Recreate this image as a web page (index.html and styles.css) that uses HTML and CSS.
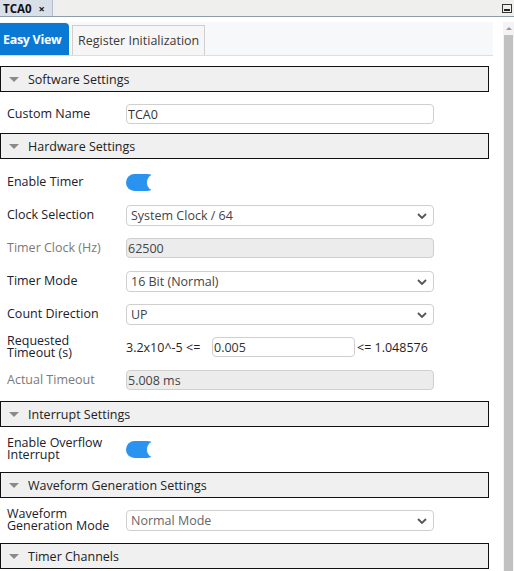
FILE: index.html
```html
<!DOCTYPE html>
<html>
<head>
<meta charset="utf-8">
<link rel="stylesheet" href="styles.css">
</head>
<body>
<div class="topbar">
  <div class="doc-tab"><span class="doc-title">TCA0</span><span class="doc-close">×</span></div>
  <div class="minbtn"><span></span></div>
</div>
<div class="main">
  <div class="content">
    <div class="viewtabs">
      <div class="vtab active">Easy View</div>
      <div class="vtab">Register Initialization</div>
    </div>

    <div class="sec-head"><span class="tri"></span>Software Settings</div>
    <div class="sec-body sw">
      <div class="row"><div class="label">Custom Name</div><input class="field" value="TCA0"></div>
    </div>

    <div class="sec-head"><span class="tri"></span>Hardware Settings</div>
    <div class="sec-body hw">
      <div class="row"><div class="label">Enable Timer</div><div class="toggle"><span class="knob"></span></div></div>
      <div class="row"><div class="label">Clock Selection</div><div class="select">System Clock / 64<svg class="chev" width="10" height="6" viewBox="0 0 10 6"><path d="M1 1 L5 5 L9 1" fill="none" stroke="#555" stroke-width="1.8"/></svg></div></div>
      <div class="row"><div class="label dim">Timer Clock (Hz)</div><input class="field disabled" value="62500" disabled></div>
      <div class="row"><div class="label">Timer Mode</div><div class="select">16 Bit (Normal)<svg class="chev" width="10" height="6" viewBox="0 0 10 6"><path d="M1 1 L5 5 L9 1" fill="none" stroke="#555" stroke-width="1.8"/></svg></div></div>
      <div class="row"><div class="label">Count Direction</div><div class="select">UP<svg class="chev" width="10" height="6" viewBox="0 0 10 6"><path d="M1 1 L5 5 L9 1" fill="none" stroke="#555" stroke-width="1.8"/></svg></div></div>
      <div class="row"><div class="label two">Requested<br>Timeout (s)</div>
        <div class="range"><span class="rmin">3.2x10^-5 &lt;=</span><input class="field short" value="0.005"><span class="rmax">&lt;= 1.048576</span></div>
      </div>
      <div class="row"><div class="label dim">Actual Timeout</div><input class="field disabled" value="5.008 ms" disabled></div>
    </div>

    <div class="sec-head"><span class="tri"></span>Interrupt Settings</div>
    <div class="sec-body tall">
      <div class="row"><div class="label two">Enable Overflow<br>Interrupt</div><div class="toggle"><span class="knob"></span></div></div>
    </div>

    <div class="sec-head"><span class="tri"></span>Waveform Generation Settings</div>
    <div class="sec-body tall">
      <div class="row"><div class="label two">Waveform<br>Generation Mode</div><div class="select light">Normal Mode<svg class="chev" width="10" height="6" viewBox="0 0 10 6"><path d="M1 1 L5 5 L9 1" fill="none" stroke="#555" stroke-width="1.8"/></svg></div></div>
    </div>

    <div class="sec-head"><span class="tri"></span>Timer Channels</div>
  </div>
  <div class="scrollbar">
    <div class="sb-arrow"></div>
    <div class="sb-thumb"></div>
  </div>
</div>
</body>
</html>
```
FILE: styles.css
```css
* { box-sizing: border-box; }
html, body { margin: 0; padding: 0; background: #fff; overflow: hidden; }
body {
  width: 514px; height: 571px;
  font-family: "Open Sans", "Noto Sans", sans-serif;
  font-size: 12px;
  color: #1f1f2a;
}
.topbar {
  height: 17px;
  background: #efefed;
  border-bottom: 1px solid #8d9bab;
  display: flex;
  justify-content: space-between;
  align-items: stretch;
}
.doc-tab {
  width: 53px;
  background: #d9dfe9;
  border-right: 1px solid #b5bfcc;
  display: flex;
  align-items: center;
  padding-left: 3px;
  gap: 7px;
  font-weight: bold;
  font-size: 11.5px;
  color: #111;
}
.doc-close { font-size: 11px; font-weight: bold; }
.minbtn {
  width: 10px; height: 9px;
  margin: 4px 2px 0 0;
  border: 1px solid #333;
  display: flex; align-items: flex-end; justify-content: center;
  padding-bottom: 1px;
}
.minbtn span { width: 6px; height: 2px; background: #222; display: block; }
.main { display: flex; gap: 10px; height: 554px; }
.content { width: 493px; }
.viewtabs {
  margin-top: 5px;
  height: 34px;
  background: #f7f8fa;
  border-bottom: 1px solid #dcdee2;
  display: flex;
  align-items: flex-end;
  gap: 3px;
  margin-bottom: 10px;
}
.vtab {
  height: 30px;
  padding: 0 5px;
  display: flex; align-items: center;
  background: #f6f6f6;
  border: 1px solid #cfcfcf;
  border-bottom: none;
  color: #3a3a3a;
  font-size: 12.5px;
  white-space: nowrap;
}
.vtab.active {
  height: 32px;
  min-width: 69px;
  padding: 0 3px;
  background: #0a79d5;
  border: none;
  border-top-right-radius: 4px;
  color: #fff;
  font-weight: bold;
  font-size: 12.5px;
  letter-spacing: -0.3px;
}
.sec-head {
  width: 489px;
  height: 26px;
  background: #f0f0f0;
  border: 1px solid #111;
  display: flex; align-items: center;
  padding-left: 8px;
  font-size: 12.5px;
  color: #222;
}
.tri {
  width: 0; height: 0;
  border-left: 5px solid transparent;
  border-right: 5px solid transparent;
  border-top: 5px solid #8a8a8a;
  margin-right: 9px;
}
.sec-body {
  padding: 12px 0 10px 7px;
  display: flex; flex-direction: column; gap: 13px;
}
.sec-body.sw { padding: 12px 0 9px 7px; }
.sec-body.hw { padding: 13px 0 11px 7px; }
.sec-body.tall { padding: 12px 0 13px 7px; }
.row { display: flex; align-items: center; height: 20px; }
.label { width: 119px; color: #20202c; font-size: 12.5px; line-height: 14px; white-space: nowrap; }
.label.dim { color: #7a7a7a; }
.label.two { line-height: 12px; font-size: 12.5px; }
.field {
  width: 308px; height: 20px;
  border: 1px solid #cfcfcf;
  border-radius: 4px;
  background: #fff;
  font-family: inherit;
  font-size: 12.5px;
  color: #333;
  padding: 0 1px;
  outline: none;
}
.field.disabled { background: #ececec; color: #444; }
.field.short { width: 143px; }
.select {
  position: relative;
  width: 308px; height: 21px;
  border: 1px solid #cfcfcf;
  border-radius: 4px;
  background: #fff;
  display: flex; align-items: center;
  padding-left: 4px;
  font-size: 12.5px;
  color: #444;
}
.select.light { color: #666; }
.chev { position: absolute; right: 6px; top: 7px; }
.range { display: flex; align-items: center; font-size: 12.5px; color: #1f1f2a; }
.rmin { width: 86px; }
.rmax { margin-left: 2px; }
.toggle {
  position: relative;
  width: 30px; height: 17px;
  background: #2a93f0;
  border-radius: 9px;
}
.knob {
  position: absolute;
  left: 21px; top: 0;
  width: 17px; height: 17px;
  border-radius: 50%;
  background: #fff;
  box-shadow: 0 0 1px rgba(255,255,255,0.6);
}
.scrollbar {
  width: 11px;
  margin-top: 5px;
  background: #f3f3f3;
  display: flex; flex-direction: column; align-items: center;
}
.sb-arrow {
  margin-top: 5px;
  width: 0; height: 0;
  border-left: 3px solid transparent;
  border-right: 3px solid transparent;
  border-bottom: 3px solid #9a9a9a;
}
.sb-thumb {
  margin-top: 5px;
  width: 9px;
  flex: 1;
  background: #c1c1c1;
}
```
